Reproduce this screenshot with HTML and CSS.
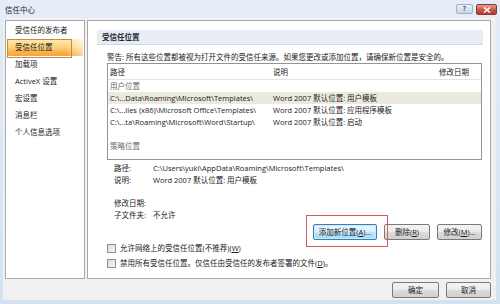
FILE: index.html
```html
<!DOCTYPE html>
<html lang="zh-CN">
<head>
<meta charset="utf-8">
<title>信任中心</title>
<link rel="stylesheet" href="styles.css">
</head>
<body>
<div class="window">
  <div class="titlebar">
    <span class="title">信任中心</span>
    <div class="caption-btns">
      <span class="cbtn help">?</span>
      <span class="cbtn close"><svg width="8" height="6" viewBox="0 0 8 6"><path d="M1 0.5 L7 5.5 M7 0.5 L1 5.5" stroke="#fff" stroke-width="1.6" fill="none"/></svg></span>
    </div>
  </div>
  <div class="client">
    <div class="panels">
      <nav class="nav">
        <div class="nav-item">受信任的发布者</div>
        <div class="nav-item selected">受信任位置</div>
        <div class="nav-item">加载项</div>
        <div class="nav-item">ActiveX 设置</div>
        <div class="nav-item">宏设置</div>
        <div class="nav-item">消息栏</div>
        <div class="nav-item">个人信息选项</div>
      </nav>
      <section class="main">
        <div class="section-head">受信任位置</div>
        <div class="content">
          <p class="warning">警告: 所有这些位置都被视为打开文件的受信任来源。如果您更改或添加位置，请确保新位置是安全的。</p>
          <div class="table">
            <div class="thead">
              <span class="c1">路径</span><span class="c2">说明</span><span class="c3">修改日期</span>
            </div>
            <div class="group">用户位置</div>
            <div class="row sel"><span class="c1">C:\...Data\Roaming\Microsoft\Templates\</span><span class="c2">Word 2007 默认位置: 用户模板</span></div>
            <div class="row"><span class="c1">C:\...iles (x86)\Microsoft Office\Templates\</span><span class="c2">Word 2007 默认位置: 应用程序模板</span></div>
            <div class="row"><span class="c1">C:\...ta\Roaming\Microsoft\Word\Startup\</span><span class="c2">Word 2007 默认位置: 启动</span></div>
            <div class="row"></div>
            <div class="group">策略位置</div>
          </div>
          <div class="details">
            <div class="dline"><span class="dlabel">路径:</span><span>C:\Users\yuki\AppData\Roaming\Microsoft\Templates\</span></div>
            <div class="dline"><span class="dlabel">说明:</span><span>Word 2007 默认位置: 用户模板</span></div>
            <div class="dline gap"><span class="dlabel">修改日期:</span></div>
            <div class="dline"><span class="dlabel">子文件夹:</span><span>不允许</span></div>
          </div>
          <div class="actions">
            <span class="btn focus add">添加新位置(<u>A</u>)...<span class="mark"></span></span>
            <span class="btn del">删除(<u>R</u>)</span>
            <span class="btn mod">修改(<u>M</u>)...</span>
          </div>
          <div class="check"><span class="box"></span><span>允许网络上的受信任位置(不推荐)(<u>W</u>)</span></div>
          <div class="check"><span class="box"></span><span>禁用所有受信任位置。仅信任由受信任的发布者签署的文件(<u>D</u>)。</span></div>
        </div>
      </section>
    </div>
    <div class="footer">
      <span class="btn ok">确定</span>
      <span class="btn cancel">取消</span>
    </div>
  </div>
</div>
</body>
</html>
```

FILE: styles.css
```css
* { box-sizing: border-box; }
html, body { margin: 0; padding: 0; }
body {
  width: 500px;
  height: 304px;
  overflow: hidden;
  font-family: "Open Sans", "Noto Sans CJK SC", sans-serif;
  font-size: 7.5px;
  color: #222;
  background: #fff;
}
.window {
  width: 500px;
  height: 304px;
  display: flex;
  flex-direction: column;
  background: linear-gradient(to bottom, #e4edf8, #d3e1f1);
}
.titlebar {
  height: 18px;
  display: flex;
  justify-content: space-between;
  align-items: flex-start;
  padding: 0 3px 0 5px;
}
.title {
  line-height: 20px;
  font-size: 7.5px;
  color: #1e1e1e;
}
.caption-btns {
  display: flex;
  gap: 3px;
  margin-top: 4px;
}
.cbtn {
  height: 10px;
  border-radius: 2px;
  display: flex;
  align-items: center;
  justify-content: center;
}
.help {
  width: 17px;
  border: 1px solid #9fb2c8;
  background: linear-gradient(to bottom, #e9f0f8, #c8d6e6);
  color: #4a5a6e;
  font-size: 7px;
  font-weight: bold;
  line-height: 8px;
}
.close {
  width: 21px;
  height: 11px;
  border: 1px solid #8d3a32;
  background: linear-gradient(to bottom, #e3a296, #cc5a4a 50%, #b9392a);
}
.client {
  flex: 1;
  margin: 0 4px 4px 3px;
  background: #f0f0f0;
  display: flex;
  flex-direction: column;
}
.panels {
  display: flex;
  gap: 2px;
  padding: 2px 5px 0 2px;
  height: 261px;
}
.nav {
  width: 80px;
  border: 1px solid #a9a9a9;
  background: #fff;
  padding-top: 1px;
}
.nav-item {
  height: 17px;
  line-height: 17px;
  padding-left: 9px;
  white-space: nowrap;
  color: #1a1a1a;
}
.nav-item.selected {
  position: relative;
  margin: 0 1px;
  padding-left: 8px;
  background:
    linear-gradient(to right, rgba(255,255,255,0) 78%, rgba(255,255,255,0.55) 100%),
    linear-gradient(to bottom, #fdeab0 0%, #fcd57e 45%, #f9b04a 80%, #f8a43a 100%);
}
.nav-item.selected::before {
  content: "";
  position: absolute;
  left: 0;
  top: 0;
  width: 63px;
  height: 17px;
  border: 1px solid #c98a46;
}
.main {
  flex: 1;
  border: 1px solid #a9a9a9;
  background: #fff;
  padding: 9px 7px 0 9px;
}
.section-head {
  height: 15px;
  line-height: 15px;
  padding-left: 5px;
  font-weight: bold;
  background: #e6edf3;
  border-bottom: 1px solid #d0d9e1;
  color: #1e2a36;
}
.content {
  padding-left: 10px;
  padding-right: 1px;
}
.warning {
  margin: 7px 0 0;
  height: 11px;
  line-height: 11px;
  white-space: nowrap;
}
.table {
  margin-top: 0;
  height: 97px;
  border: 1px solid #8f959c;
  background: #fff;
}
.thead {
  display: flex;
  height: 16px;
  line-height: 16px;
  border-bottom: 1px solid #e3e3e3;
}
.c1 { width: 165px; padding-left: 2px; white-space: nowrap; }
.c2 { width: 166px; white-space: nowrap; }
.c3 { flex: 1; white-space: nowrap; }
.group {
  height: 12px;
  line-height: 12px;
  padding-left: 2px;
  color: #6b6b6b;
}
.row {
  display: flex;
  height: 12px;
  line-height: 12px;
}
.row.sel { background: #ece9df; }
.details { margin-top: 2px; padding-left: 7px; }
.dline {
  display: flex;
  height: 12px;
  line-height: 12px;
  white-space: nowrap;
}
.dline.gap { margin-top: 11px; }
.dlabel { width: 39px; }
.actions {
  display: flex;
  justify-content: flex-end;
  gap: 7px;
  margin-top: 3px;
  height: 16px;
}
.btn {
  height: 16px;
  line-height: 14px;
  text-align: center;
  border: 1px solid #7a7a7a;
  border-radius: 2px;
  background: linear-gradient(to bottom, #f4f4f4 0%, #ebebeb 48%, #dcdcdc 52%, #d0d0d0 100%);
  white-space: nowrap;
  color: #1a1a1a;
}
.btn u { text-decoration: underline; }
.btn.focus {
  border-color: #3c7fb1;
  background: linear-gradient(to bottom, #eaf6fd 0%, #d9f0fc 48%, #bee6fd 52%, #a7d9f5 100%);
  box-shadow: inset 0 0 0 1px #c8e8fb;
}
.add { width: 64px; position: relative; }
.del { width: 46px; }
.mod { width: 45px; }
.mark {
  position: absolute;
  left: -8px;
  top: -10px;
  width: 82px;
  height: 32px;
  border: 1px solid #d9595a;
}
.check {
  display: flex;
  align-items: center;
  gap: 4px;
  height: 12px;
  line-height: 12px;
  margin-top: 2px;
  padding-left: 0;
  white-space: nowrap;
}
.check + .check { margin-top: 3px; }
.box {
  width: 9px;
  height: 9px;
  border: 1px solid #8e8f8f;
  background: linear-gradient(135deg, #dcdcdc, #f6f6f6);
}
.footer {
  display: flex;
  justify-content: flex-end;
  gap: 7px;
  padding: 3px 5px 0 0;
}
.ok { width: 47px; }
.cancel { width: 45px; }
```
